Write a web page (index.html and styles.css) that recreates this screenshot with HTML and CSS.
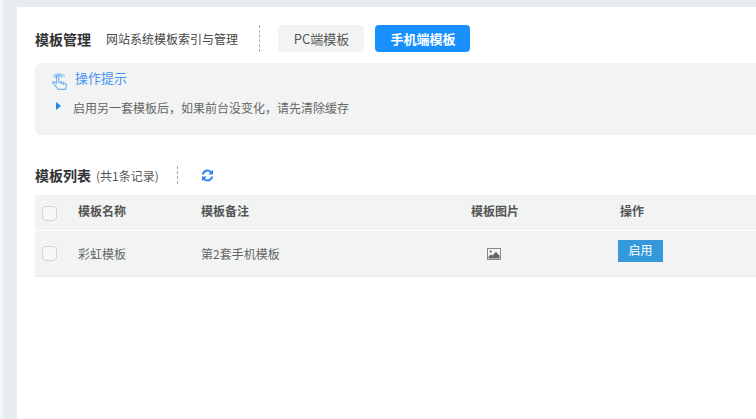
FILE: index.html
```html
<!DOCTYPE html>
<html lang="zh">
<head>
<meta charset="utf-8">
<title>模板管理</title>
<link rel="stylesheet" href="styles.css">
</head>
<body>
<main class="panel">
  <header class="head">
    <h1 class="title">模板管理</h1>
    <span class="subtitle">网站系统模板索引与管理</span>
    <span class="dash dash-head"></span>
    <a class="tab">PC端模板</a>
    <a class="tab tab-on">手机端模板</a>
  </header>
  <section class="tips">
    <div class="tips-head">
      <svg class="hand" viewBox="0 0 17 19" width="17" height="19" fill="none" stroke="#74b4f2" stroke-width="1.2" stroke-linecap="round" stroke-linejoin="round">
        <path d="M2.500 5.500a6 4.500 0 0 1 11 0" stroke="#a5d2f8" stroke-width="1.500"/>
        <path d="M4.500 6.200a3.500 2.800 0 0 1 6.500-.2" stroke="#74b4f2" stroke-width="1.500"/>
        <path d="M5.500 16 1.800 12.200c-.8-1 .4-2.200 1.500-1.400L5.500 12.500V6.600c0-1.500 2.200-1.500 2.200 0v4.200l5.600 1.400c1.400.5 2.200 1.400 2 2.800l-.5 3.300H7z"/>
        <path d="M10 10.800v2.200M12.400 11.400v2.200"/>
      </svg>
      <span class="tips-title">操作提示</span>
    </div>
    <div class="tips-line">
      <i class="arrow"></i>
      <span>启用另一套模板后，如果前台没变化，请先清除缓存</span>
    </div>
  </section>
  <div class="list-head">
    <h2 class="list-title">模板列表</h2>
    <span class="count">(共1条记录)</span>
    <span class="dash dash-list"></span>
    <svg class="refresh" viewBox="0 0 14 14" width="13" height="13" fill="#2f86f0">
      <path d="M13 .8v5.200H7.800l2-2A3.800 3.800 0 0 0 3.200 5.800H.9a6.100 6.100 0 0 1 10.400-3.300z"/>
      <path d="M1 13.200V8h5.200l-2 2a3.800 3.800 0 0 0 6.600-1.800h2.300a6.100 6.100 0 0 1-10.400 3.300z"/>
    </svg>
  </div>
  <div class="table">
    <div class="row row-head">
      <span class="check"></span>
      <span>模板名称</span>
      <span>模板备注</span>
      <span>模板图片</span>
      <span class="op-label">操作</span>
    </div>
    <div class="row row-body">
      <span class="check"></span>
      <span>彩虹模板</span>
      <span>第2套手机模板</span>
      <span class="pic">
        <svg viewBox="0 0 14 12" width="14" height="12">
          <rect x=".5" y=".5" width="13" height="11" fill="#f4f4f4" stroke="#888"/>
          <path d="M1.500 10.500V8.500l2.500-2 1.500 1L9 3.800l3.500 4v2.700z" fill="#666"/>
          <circle cx="3.800" cy="3.500" r="1.200" fill="#888"/>
        </svg>
      </span>
      <span><button class="enable" type="button">启用</button></span>
    </div>
  </div>
</main>
</body>
</html>
```

FILE: styles.css
```css
* { box-sizing: border-box; }
html, body { height: 100%; }
body {
  margin: 0;
  padding: 7px 0 0 14px;
  background: #e9ecef;
  border-left: 3px solid #f3f5f6;
  overflow: hidden;
  font-family: "Noto Sans CJK SC", "Liberation Sans", sans-serif;
  font-size: 12px;
  color: #555;
}
.panel {
  height: 412px;
  background: #fff;
  padding: 18px 0 0 18px;
}
.head {
  display: flex;
  align-items: center;
  height: 27px;
}
.title {
  margin: 0;
  font-size: 14px;
  font-weight: 700;
  color: #333;
  width: 71px;
}
.subtitle { color: #444; width: 153px; }
.dash {
  display: block;
  width: 0;
  border-left: 1px dashed #aaa;
}
.dash-head { height: 27px; margin-right: 18px; }
.tab {
  display: flex;
  align-items: center;
  justify-content: center;
  width: 86px;
  height: 27px;
  border-radius: 4px;
  background: #f2f4f4;
  color: #555;
  font-size: 13px;
  margin-right: 11px;
  padding-left: 1px;
  padding-bottom: 1px;
}
.tab-on {
  width: 95px;
  background: #1890ff;
  color: #fff;
  font-weight: 700;
}
.tips {
  margin-top: 11px;
  height: 72px;
  background: #f2f4f4;
  border-radius: 6px 0 0 6px;
  padding: 6px 0 0 16px;
}
.tips-head {
  display: flex;
  align-items: center;
  height: 20px;
}
.hand { flex: none; margin-top: 2px; }
.tips-title {
  margin-left: 7px;
  margin-bottom: 4px;
  font-size: 13px;
  color: #4a94f5;
}
.tips-line {
  display: flex;
  align-items: center;
  margin-top: 8px;
  height: 20px;
  padding-left: 5px;
  color: #666;
}
.arrow {
  width: 0;
  height: 0;
  border-left: 5px solid #1f86e8;
  border-top: 4px solid transparent;
  border-bottom: 4px solid transparent;
  margin-right: 12px;
  margin-bottom: 2px;
}
.list-head {
  display: flex;
  align-items: center;
  margin-top: 31px;
  height: 18px;
}
.list-title {
  margin: 0;
  font-size: 14px;
  font-weight: 700;
  color: #333;
  width: 61px;
}
.count { width: 81px; color: #555; }
.dash-list { height: 18px; margin-right: 23px; }
.refresh { flex: none; }
.table { margin-top: 11px; }
.row {
  display: grid;
  grid-template-columns: 43px 123px 270px 148px 1fr;
  align-items: center;
  background: #f2f4f4;
  color: #666;
}
.row > .check { margin-left: 7px; }
.row-head {
  height: 36px;
  border-bottom: 1px solid #fff;
  font-weight: 700;
  color: #555;
  padding-bottom: 4px;
}
.row-head > .check { margin-top: 5px; }
.op-label { padding-left: 1px; }
.row-body {
  height: 46px;
  border-bottom: 1px solid #ececec;
}
.check {
  display: block;
  width: 15px;
  height: 15px;
  background: #f8f8f8;
  border: 1px solid #d2d2d2;
  border-radius: 4px;
}
.pic { display: flex; padding-left: 16px; }
.enable {
  display: block;
  width: 45px;
  height: 22px;
  margin: 0 0 5px -1px;
  padding: 0 0 3px;
  border: 0;
  background: #3498db;
  color: #fff;
  font: inherit;
}
```
